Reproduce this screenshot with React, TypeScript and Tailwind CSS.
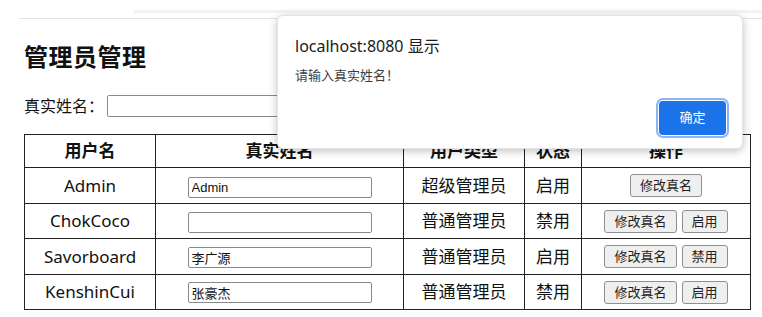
const rows = [
  { user: 'Admin', real: 'Admin', type: '超级管理员', status: '启用', toggle: null },
  { user: 'ChokCoco', real: '', type: '普通管理员', status: '禁用', toggle: '启用' },
  { user: 'Savorboard', real: '李广源', type: '普通管理员', status: '启用', toggle: '禁用' },
  { user: 'KenshinCui', real: '张豪杰', type: '普通管理员', status: '禁用', toggle: '启用' },
];

const cjk = { fontFamily: '"Noto Sans", "Noto Sans CJK SC", sans-serif' };

const Btn = ({ children }: { children: string }) => (
  <button className="h-[23px] px-[9px] text-[13px] leading-none text-[#222] bg-[#efefef] border border-[#8f8f8f] rounded-[3px]">
    {children}
  </button>
);

export default function App() {
  return (
    <div className="relative w-[762px] h-[317px] bg-white overflow-hidden text-[#111]" style={cjk}>
      {/* browser chrome leftovers */}
      <div className="pt-[10px]">
        <div className="ml-[133px] h-[3px] bg-[#f1f3f4] rounded-l-full" />
        <div className="ml-[19px] mt-[5px] h-px bg-[#e2e2e2]" />
      </div>

      <div className="pl-[24px]">
        <h1 className="mt-[23px] text-[24px] font-bold leading-[30px] tracking-[0.5px]">管理员管理</h1>
        <div className="mt-[22px] flex items-center gap-[3px] text-[16px]">
          <span>真实姓名：</span>
          <input
            className="w-[300px] h-[22px] border border-[#8a8a8a] rounded-[2px] bg-white"
            defaultValue=""
          />
        </div>

        <table className="mt-[16px] border-collapse text-[17px] text-center">
          <colgroup>
            <col className="w-[131px]" />
            <col className="w-[248px]" />
            <col className="w-[121px]" />
            <col className="w-[57px]" />
            <col className="w-[169px]" />
          </colgroup>
          <thead>
            <tr className="h-[33px]">
              {['用户名', '真实姓名', '用户类型', '状态', '操作'].map((h) => (
                <th key={h} className="border border-[#222] font-bold p-0">{h}</th>
              ))}
            </tr>
          </thead>
          <tbody>
            {rows.map((r, i) => (
              <tr key={r.user} className={i % 2 === 0 ? 'h-[36px]' : 'h-[35px]'}>
                <td className="border border-[#222] p-0">{r.user}</td>
                <td className="border border-[#222] p-0">
                  <input
                    className="w-[184px] h-[21px] border border-[#8a8a8a] rounded-[2px] px-[3px] text-[13px] text-[#111]"
                    style={{ fontFamily: '"Liberation Sans", "Noto Sans CJK SC", sans-serif' }}
                    defaultValue={r.real}
                  />
                </td>
                <td className="border border-[#222] p-0">{r.type}</td>
                <td className="border border-[#222] p-0">{r.status}</td>
                <td className="border border-[#222] p-0">
                  <div className="flex justify-center gap-[5px]">
                    <Btn>修改真名</Btn>
                    {r.toggle && <Btn>{r.toggle}</Btn>}
                  </div>
                </td>
              </tr>
            ))}
          </tbody>
        </table>
      </div>

      {/* alert dialog */}
      <div className="absolute left-[277px] top-[15px] w-[466px] h-[134px] bg-white rounded-[6px] border border-[#e3e3e3] shadow-[0_2px_8px_rgba(0,0,0,0.25)] pl-[17px] pr-[16px] pt-[18px]">
        <div className="text-[16px] leading-[24px] text-[#202124]">localhost:8080 显示</div>
        <div className="mt-[8px] text-[13px] leading-[18px] text-[#3c4043]">请输入真实姓名！</div>
        <div className="mt-[17px] flex justify-end">
          <button className="w-[67px] h-[34px] rounded-[4px] bg-[#1a73e8] text-white text-[13px] ring-2 ring-[#8ab4f8] ring-offset-1">
            确定
          </button>
        </div>
      </div>
    </div>
  );
}
